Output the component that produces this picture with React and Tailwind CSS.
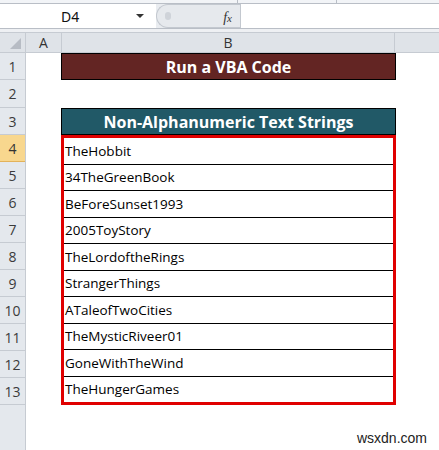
import React from "react";

const items = [
    "TheHobbit",
    "34TheGreenBook",
    "BeForeSunset1993",
    "2005ToyStory",
    "TheLordoftheRings",
    "StrangerThings",
    "ATaleofTwoCities",
    "TheMysticRiveer01",
    "GoneWithTheWind",
    "TheHungerGames",
];

const cellFont = { fontFamily: '"Open Sans", "Noto Sans", sans-serif' };

function RowHead({ n, h, active }) {
    return (
        <div
            className={`flex items-center justify-center border-b text-[14px] ${
                active
                    ? "bg-[#f8d78e] border-[#e3b25a] text-[#333]"
                    : "bg-[#e4e8ed] border-[#c6cbd2] text-[#3b3b3b]"
            } ${h}`}
            style={cellFont}
        >
            {n}
        </div>
    );
}

export default function App() {
    const heads = [
        { n: 1, h: "h-[27px]" },
        { n: 2, h: "h-[28px]" },
        ...Array.from({ length: 11 }, (_, i) => ({ n: i + 3, h: "h-[27px]" })),
    ];

    return (
        <div className="w-[439px] h-[450px] overflow-hidden bg-white relative select-none">
            {/* ribbon strip */}
            <div className="h-[4px] bg-[#f2f4f7] border-b border-[#b9bec6] flex">
                <div className="w-[238px] border-r border-[#b9bec6]" />
                <div className="w-[99px] border-r border-[#b9bec6]" />
            </div>

            {/* name box + formula bar */}
            <div className="h-[25px] flex bg-[#e9ecf0] border-b border-[#b9bec6]">
                <div className="w-[148px] bg-white flex items-center relative">
                    <span
                        className="absolute left-[61px] text-[14px] text-[#111]"
                        style={{ fontFamily: '"Noto Sans", sans-serif' }}
                    >
                        D4
                    </span>
                    <span className="absolute right-[4px] top-[10px] w-0 h-0 border-l-[4px] border-r-[4px] border-t-[4px] border-l-transparent border-r-transparent border-t-[#333]" />
                </div>
                <div className="w-[8px] bg-white" />
                <div className="w-[84px] bg-[#e6e9ed] rounded-l-full border-l border-y border-[#c3c8cf] flex items-center relative">
                    <span className="absolute left-[8px] w-[6px] h-[8px] rounded-full bg-[#cfd3d9]" />
                    <span
                        className="absolute right-[8px] top-[2px] text-[14px] italic text-[#333]"
                        style={{ fontFamily: '"Liberation Serif", serif' }}
                    >
                        f<span className="text-[11px]">x</span>
                    </span>
                </div>
                <div className="flex-1 bg-white border-l border-[#c3c8cf]" />
            </div>
            <div className="h-[4px] bg-[#eef0f3] border-b border-[#c6cbd2]" />

            {/* column headers */}
            <div className="h-[20px] flex bg-[#dfe3e8] border-b border-[#c6cbd2] text-[14px] text-[#333]" style={cellFont}>
                <div className="w-[26px] border-r border-[#c6cbd2] relative">
                    <span
                        className="absolute right-[4px] bottom-[3px] w-0 h-0"
                        style={{ borderBottom: "11px solid #b7bcc4", borderLeft: "11px solid transparent" }}
                    />
                </div>
                <div className="w-[36px] border-r border-[#c6cbd2] flex items-center justify-center">A</div>
                <div className="w-[333px] border-r border-[#c6cbd2] flex items-center justify-center">B</div>
                <div className="flex-1" />
            </div>

            {/* body */}
            <div className="flex">
                <div className="w-[26px] flex flex-col border-r border-[#c6cbd2] bg-[#e4e8ed] h-[397px]">
                    {heads.map((r) => (
                        <RowHead key={r.n} n={r.n} h={r.h} active={r.n === 4} />
                    ))}
                </div>
                <div className="w-[35px]" />
                <div className="w-[335px] flex flex-col">
                    <div
                        className="h-[27px] bg-[#632523] border border-black flex items-center justify-center text-white font-bold text-[16px]"
                        style={cellFont}
                    >
                        Run a VBA Code
                    </div>
                    <div className="h-[28px]" />
                    <div
                        className="h-[27px] bg-[#215967] border border-black flex items-center justify-center text-white font-bold text-[16px]"
                        style={cellFont}
                    >
                        Non-Alphanumeric Text Strings
                    </div>
                    <div className="h-[270px] border-[3px] border-[#e00000] flex flex-col">
                        {items.map((t, i) => (
                            <div
                                key={t}
                                className={`flex-1 flex items-center pl-[1px] text-[13.5px] text-black ${
                                    i > 0 ? "border-t border-black" : ""
                                }`}
                                style={cellFont}
                            >
                                {t}
                            </div>
                        ))}
                    </div>
                </div>
                <div className="flex-1" />
            </div>

            <div
                className="absolute right-[12px] bottom-[1px] text-[14px] text-[#222]"
                style={{ fontFamily: '"Liberation Sans", sans-serif' }}
            >
                wsxdn.com
            </div>
        </div>
    );
}
